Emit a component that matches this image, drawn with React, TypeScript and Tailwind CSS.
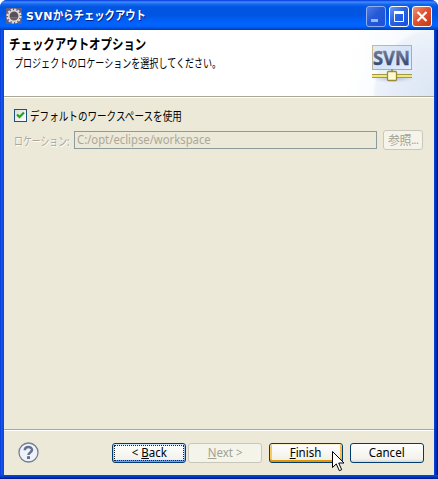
import React from 'react';

const jp = "font-['Noto_Sans_CJK_JP','Liberation_Sans',sans-serif] whitespace-nowrap";

function Gear() {
  return (
    <svg width="16" height="16" viewBox="0 0 16 16" className="shrink-0">
      <rect width="16" height="16" fill="#5f5d83" />
      <circle cx="8" cy="8" r="6.6" fill="none" stroke="#e2dcda" strokeWidth="2" strokeDasharray="2.2 1.25" />
      <circle cx="8" cy="8" r="5.2" fill="#5c5058" stroke="#e6e0dc" strokeWidth="1.5" />
      <path d="M4.5 9.5h7M5 11h6" stroke="#776e80" />
    </svg>
  );
}

function SvnLogo() {
  return (
    <svg width="50" height="50" viewBox="0 0 50 50">
      <defs>
        <linearGradient id="panel" x1="0" y1="0" x2="1" y2="1">
          <stop offset="0" stopColor="#e4eaf2" />
          <stop offset=".6" stopColor="#d4e4fb" />
          <stop offset="1" stopColor="#e7f1ff" />
        </linearGradient>
        <linearGradient id="edge" x1="0" y1="0" x2="1" y2="1">
          <stop offset="0" stopColor="#c9bd8d" />
          <stop offset="1" stopColor="#9aa7b8" />
        </linearGradient>
        <linearGradient id="ink" x1="0" y1="0" x2="0" y2="1">
          <stop offset="0" stopColor="#8794aa" />
          <stop offset="1" stopColor="#22305e" />
        </linearGradient>
        <radialGradient id="shade">
          <stop offset="0" stopColor="#8e9bb5" stopOpacity=".65" />
          <stop offset="1" stopColor="#a9b5cc" stopOpacity="0" />
        </radialGradient>
      </defs>
      <ellipse cx="27" cy="40" rx="22" ry="5" fill="url(#shade)" />
      <rect x="6.5" y="7.5" width="39" height="24" fill="url(#panel)" stroke="url(#edge)" />
      <text x="7" y="27" textLength="37" lengthAdjust="spacingAndGlyphs" fontFamily="Open Sans, sans-serif" fontWeight="700" fontSize="19" fill="url(#ink)" stroke="url(#ink)" strokeWidth=".4">SVN</text>
      <path d="M26 31v3" stroke="#9a9968" strokeWidth="2" />
      <rect x="6" y="36" width="40" height="4" fill="#a39a42" />
      <rect x="6" y="37" width="40" height="2" fill="#f1e87d" />
      <rect x="21.5" y="33.5" width="9" height="9" rx="1" fill="#fffbd0" stroke="#9a8b3b" strokeWidth="1.3" />
    </svg>
  );
}

function Caption({ kind }: { kind: 'min' | 'max' | 'close' }) {
  const tone =
    kind === 'close'
      ? 'border-white bg-[linear-gradient(135deg,#ee9679,#df5230_45%,#c83a16)]'
      : kind === 'max'
        ? 'border-white bg-[linear-gradient(135deg,#6d98f3,#2a62e2_45%,#1552dc)]'
        : 'border-[#8fadf0] bg-[linear-gradient(135deg,#4d7be5,#2459d6_45%,#1d53d6)]';
  return (
    <div className={`h-[21px] w-[20px] rounded-[3px] border ${tone}`}>
      <svg width="18" height="19" viewBox="0 0 18 19" fill="none">
        {kind === 'min' && <path d="M4 13.5h7" stroke="#9db7f4" strokeWidth="3" />}
        {kind === 'max' && <path d="M4.5 4v10.5h9V4" stroke="white" strokeWidth="1" />}
        {kind === 'max' && <path d="M4 5.5h10" stroke="white" strokeWidth="3" />}
        {kind === 'close' && <path d="M4.5 5l9 9M13.5 5l-9 9" stroke="white" strokeWidth="2.2" />}
      </svg>
    </div>
  );
}

function Button({ children, look = 'normal' }: { children: React.ReactNode; look?: 'normal' | 'focus' | 'hot' | 'off' }) {
  const tone = {
    normal: 'border-[#003c74] bg-[linear-gradient(#ffffff,#f2f1ea_85%,#dbd5c9)] text-black',
    focus: 'border-[#003c74] bg-[linear-gradient(#ffffff,#f2f1ea_85%,#e0dfe0)] text-black shadow-[inset_0_1px_#cee7ff,inset_0_-2px_#7b9fe0,inset_1px_0_#b4cdf5,inset_-1px_0_#a3bff0]',
    hot: 'border-[#003c74] bg-[linear-gradient(#ffffff,#f0eee6)] text-black shadow-[inset_0_1px_#fff0cf,inset_0_-2px_#e59700,inset_2px_0_#fac95e,inset_-2px_0_#f7bf4a]',
    off: 'border-[#c9c7ba] bg-[#f5f4ea] text-[#a1a192]',
  }[look];
  return (
    <div className={`grid h-[20px] w-[74px] grid-cols-1 rounded-[3px] border p-px ${tone}`}>
      <div className={`flex items-center justify-center whitespace-nowrap font-['Noto_Sans',sans-serif] text-[12px] leading-[14px] ${look === 'focus' ? 'border border-dotted border-[#222]' : ''}`}>
        <span className="inline-block scale-x-[0.96]">{children}</span>
      </div>
    </div>
  );
}

export default function App() {
  return (
    <div className="relative h-[479px] w-[438px] overflow-hidden rounded-t-[7px] bg-[linear-gradient(90deg,#001ed0,#1660ef_1px,#0848db_3px,#0848db_434px,#0030b8_436px,#00108c)]">
      <header className="flex h-[30px] items-center bg-[linear-gradient(#0831d9,#3b90ff_2px,#1769ed_4px,#0055e3_7px,#0055e3_15px,#0062fa_22px,#0064ff_26px,#0047cb_29px,#003cb2)] pl-[6px] pr-[6px] pt-[2px]">
        <Gear />
        <div className={`${jp} ml-[4px] w-[280px] text-[12px] font-bold leading-4 text-white [text-shadow:1px_1px_#00218a]`}>
          <span className="font-['DejaVu_Sans'] text-[11px] tracking-[0.4px]">SVN</span>
          <span className="inline-block origin-left scale-x-[0.86]">からチェックアウト</span>
        </div>
        <div className="ml-auto flex gap-[3px]">
          <Caption kind="min" />
          <Caption kind="max" />
          <Caption kind="close" />
        </div>
      </header>
      <main className="ml-[4px] flex h-[445px] w-[430px] flex-col bg-[#ece9d8]">
        <section className="flex h-[66px] justify-between bg-white">
          <div className="pl-[5px] pt-[4px]">
            <h1 className={`${jp} w-[200px] origin-left scale-x-[0.817] text-[14px] font-bold leading-[18px] text-black`}>チェックアウトオプション</h1>
            <p className={`${jp} ml-[5px] mt-[3px] w-[290px] origin-left scale-x-[0.753] text-[12px] leading-[16px] text-black`}>プロジェクトのロケーションを選択してください。</p>
          </div>
          <div className="h-full w-[90px] bg-[radial-gradient(ellipse_62px_68px_at_100%_100%,#dce5f4_0%,#e6edf8_65%,#eef3fa_94%,transparent_100%),linear-gradient(100deg,#ffffff_10%,#f3f6fc)] pl-[22px] pt-[8px]">
            <SvnLogo />
          </div>
        </section>
        <div className="h-[2px] border-t border-[#aca899] bg-white" />
        <section className="flex-1 pl-[10px] pt-[11px]">
          <div className="flex h-[13px] items-center">
            <div className="h-[13px] w-[13px] border border-[#1c5180] bg-[linear-gradient(135deg,#dcdcd7,white)]">
              <svg width="11" height="11" viewBox="0 0 11 11">
                <path d="M2 4.5l2.5 2.5L9 2.5" fill="none" stroke="#21a121" strokeWidth="2.2" />
              </svg>
            </div>
            <span className={`${jp} ml-[3px] w-[200px] origin-left scale-x-[0.798] text-[12px] leading-[16px] text-black`}>デフォルトのワークスペースを使用</span>
          </div>
          <div className="mt-[8px] flex h-[20px] items-center">
            <div className="w-[60px]">
              <span className={`${jp} inline-block origin-left scale-x-[0.74] text-[12px] leading-[16px] text-[#aca899] [text-shadow:1px_1px_#fff]`}>ロケーション:</span>
            </div>
            <div className="flex h-[18px] w-[303px] items-center border border-[#8c9c9c] pl-[2px] font-['Noto_Sans',sans-serif] text-[12px] leading-4 text-[#aca899]"><span className="inline-block origin-left scale-x-[0.94]">C:/opt/eclipse/workspace</span></div>
            <div className={`${jp} ml-[6px] flex h-[20px] w-[40px] items-center justify-center rounded-[3px] border border-[#c9c7ba] bg-[#f5f4ea] text-[12px] text-[#a1a192]`}>
              <span className="tracking-[-0.5px]">参照</span><span className="font-['Liberation_Sans'] tracking-[-1px]">...</span>
            </div>
          </div>
        </section>
        <footer className="flex h-[46px] items-start border-t border-[#aca899] pl-[14px] pt-[13px] shadow-[inset_0_1px_#fff]">
          <svg width="21" height="21" viewBox="0 0 21 21" className="-mt-[1px] mr-[73px]">
            <circle cx="10.5" cy="10.5" r="9.5" fill="#f0f2fa" stroke="#737e98" strokeWidth="1.3" />
            <path d="M6.8 8.2C6.8 3.8 14 4 14 7.8c0 2.8-3.5 2.5-3.5 5.2" fill="none" stroke="#65728f" strokeWidth="2.5" />
            <rect x="9" y="14.2" width="3" height="2.8" fill="#65728f" />
          </svg>
          <Button look="focus">&lt; <u>B</u>ack</Button>
          <div className="ml-[2px] mr-[7px]"><Button look="off"><u>N</u>ext &gt;</Button></div>
          <Button look="hot"><u>F</u>inish</Button>
          <div className="ml-[7px]"><Button>Cancel</Button></div>
        </footer>
      </main>
      <div className="h-[4px] bg-[linear-gradient(#0848db,#0038c0,#00138c)]" />
      <svg width="13" height="21" viewBox="0 0 13 21" className="absolute left-[332px] top-[451px]">
        <path d="M.5.5v16l3.8-3.6 3 6.8 2.4-1-3-6.7H12z" fill="white" stroke="black" />
      </svg>
    </div>
  );
}
